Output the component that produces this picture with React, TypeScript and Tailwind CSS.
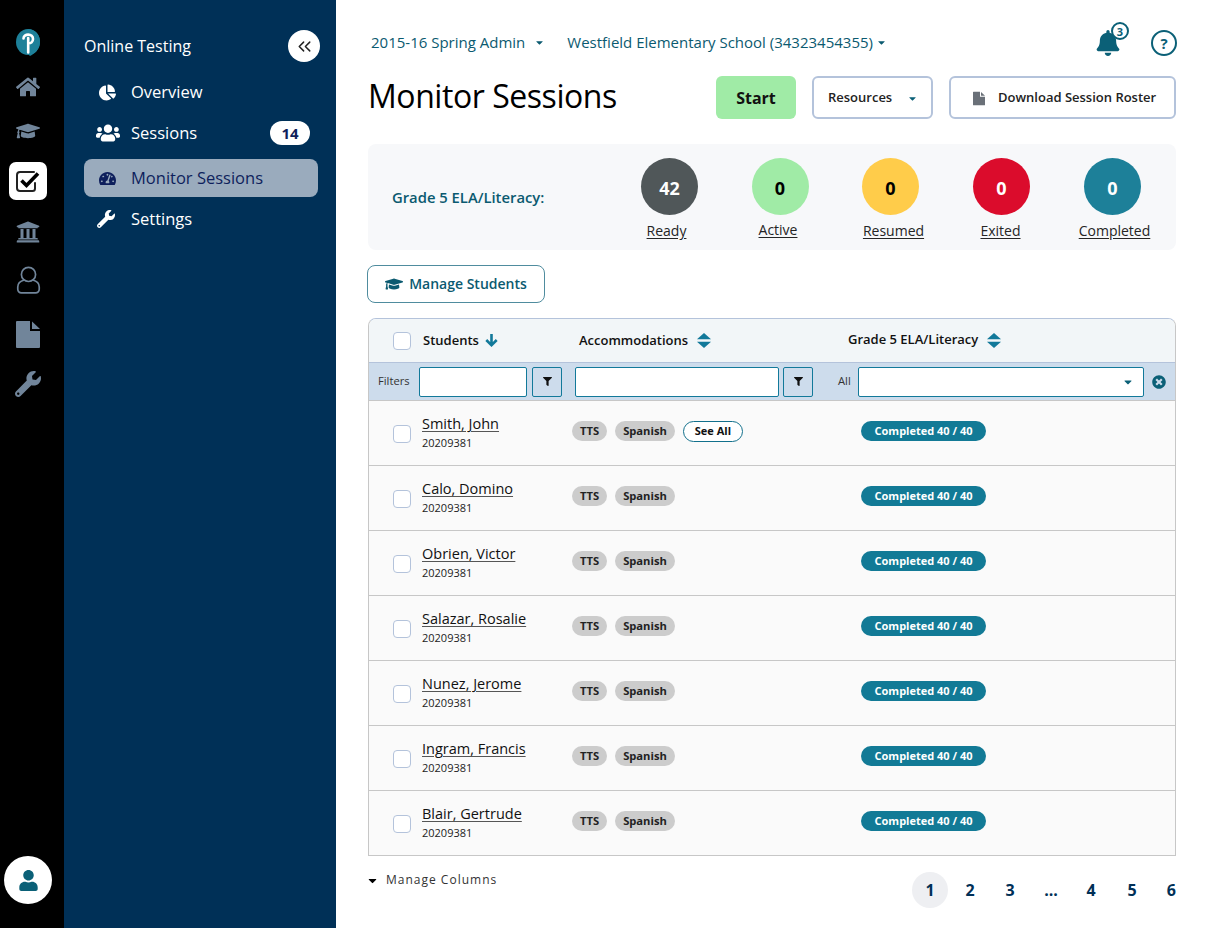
import React from "react";
import {
  FaHome, FaGraduationCap, FaUniversity, FaWrench, FaChartPie, FaUsers, FaTachometerAlt,
  FaBell, FaFilter, FaTimesCircle, FaUser, FaCaretDown,
} from "react-icons/fa";
import { ChevronsLeft } from "lucide-react";

const students = [
  "Smith, John", "Calo, Domino", "Obrien, Victor", "Salazar, Rosalie", "Nunez, Jerome", "Ingram, Francis", "Blair, Gertrude",
];

const stats = [
  { value: "42", label: "Ready", w: "w-[111px]", circle: "bg-[#505759] text-white", offset: "mr-[6px]", mt: "mt-[6px]" },
  { value: "0", label: "Active", w: "w-[110px]", circle: "bg-[#A0EBA6] text-black", offset: "mr-[4px]", mt: "mt-[5px]" },
  { value: "0", label: "Resumed", w: "w-[111px]", circle: "bg-[#FFCC4A] text-black", offset: "ml-[6px]", mt: "mt-[6px]" },
  { value: "0", label: "Exited", w: "w-[111px]", circle: "bg-[#DB0C2C] text-white", offset: "mr-[2px]", mt: "mt-[6px]" },
  { value: "0", label: "Completed", w: "w-[111px]", circle: "bg-[#1D8099] text-white", offset: "ml-[4px]", mt: "mt-[6px]" },
];

function Stat({ s }: { s: (typeof stats)[number] }) {
  return (
    <div className={`flex flex-col items-center ${s.w}`}>
      <div className={`flex h-[57px] w-[57px] items-center justify-center rounded-full pt-[3px] text-[18px] font-bold ${s.circle}`}>{s.value}</div>
      <span className={`whitespace-nowrap text-[14px] leading-[20px] text-[#252525] underline underline-offset-2 ${s.offset} ${s.mt}`}>{s.label}</span>
    </div>
  );
}

function Checkbox() {
  return <span className="block h-[18px] w-[18px] rounded-[4px] border border-[#B4C3DB] bg-white" />;
}

function SortIcon() {
  return (
    <svg width="14" height="15" viewBox="0 0 14 15" className="text-[#12799A]" fill="currentColor">
      <path d="M7 0 14 6.3H0Z" />
      <path d="M0 8.7H14L7 15Z" />
    </svg>
  );
}

function FileIcon({ w, h, className }: { w: number; h: number; className: string }) {
  return (
    <svg width={w} height={h} viewBox="0 0 24 27" className={className} fill="currentColor">
      <path d="M1 0H14V10H24V26A1 1 0 0 1 23 27H1A1 1 0 0 1 0 26V1A1 1 0 0 1 1 0Z" />
      <path d="M16 0.5 24 8H16Z" />
    </svg>
  );
}

function Tag({ children }: { children: React.ReactNode }) {
  return (
    <span className="flex h-[20px] items-center rounded-full bg-[#CCCCCC] px-[8px] text-[11.2px] font-bold text-[#222]">{children}</span>
  );
}

function Row({ name, first }: { name: string; first: boolean }) {
  return (
    <div className="flex h-[65px] items-center border-b border-[#C7C7C7] bg-[#FAFAFA] pl-[24px] last:h-[64px] last:border-b-0">
      <div className="w-[29px] pt-[2px]"><Checkbox /></div>
      <div className="flex w-[150px] flex-col pb-[1px]">
        <span className="text-[14.5px] leading-[17px] text-[#111] underline decoration-[#555] underline-offset-2">{name}</span>
        <span className="mt-[4px] text-[11px] leading-[14px] text-[#222]">20209381</span>
      </div>
      <div className="flex w-[289px] items-center gap-[8px] pb-[4px]">
        <Tag>TTS</Tag>
        <Tag>Spanish</Tag>
        {first && (
          <span className="flex h-[21px] items-center rounded-full border border-[#12708C] bg-white px-[11px] text-[11px] font-bold text-[#111]">See All</span>
        )}
      </div>
      <div className="pb-[4px]">
        <span className="flex h-[20px] w-[125px] items-center justify-center rounded-full bg-[#127A96] text-[11px] font-bold text-white">Completed 40 / 40</span>
      </div>
    </div>
  );
}

function NavItem({ icon, label, active, badge, h }: { icon: React.ReactNode; label: string; active?: boolean; badge?: string; h: string }) {
  return (
    <div className={`flex items-center rounded-[8px] ${h} ${active ? "bg-[#9AABBD] text-[#0E1F5C]" : "text-white"}`}>
      <div className="flex w-[47px] justify-center">{icon}</div>
      <span className={`text-[16.5px] leading-[22px] ${active ? "pb-[1px]" : ""}`}>{label}</span>
      {badge && (
        <span className="ml-auto mr-[8px] flex h-[24px] w-[40px] items-center justify-center rounded-full bg-white text-[15px] font-bold text-[#0E1F5C]">{badge}</span>
      )}
    </div>
  );
}

function RailIcon({ children, h }: { children: React.ReactNode; h: string }) {
  return <div className={`flex w-full items-center justify-center text-[#71859A] ${h}`}>{children}</div>;
}

function FilterButton() {
  return (
    <span className="flex h-[30px] w-[30px] items-center justify-center rounded-[2px] border border-[#12799A] bg-[#CDDCEC] text-[#111]">
      <FaFilter size={9} />
    </span>
  );
}

export default function App() {
  return (
    <div className="flex h-[928px] w-[1208px] overflow-hidden bg-white font-['Open_Sans',sans-serif]">
      {/* rail */}
      <aside className="flex h-full w-[64px] shrink-0 flex-col items-center bg-black pt-[29px] pr-[8px]">
        <svg width="24" height="27" viewBox="0 0 24 27" aria-label="Pearson">
          <path d="M12 0C18.6 0 24 5.4 24 12.2 24 19.5 19 24 15 26.6 14 27.2 13 26.6 13 25.5V21" fill="#1D8099" />
          <ellipse cx="12" cy="13" rx="12" ry="13" fill="#1D8099" />
          <path d="M7.5 9.5C7.5 7 9.8 5.6 12.2 5.6 15 5.6 17 7.4 17 10 17 12.8 14.8 14.4 12.6 14.4M12.2 9V23.5" fill="none" stroke="#fff" strokeWidth="2.6" strokeLinecap="round" />
        </svg>
        <RailIcon h="h-[44px] mt-[9px]"><FaHome size={24} /></RailIcon>
        <RailIcon h="h-[44px]"><FaGraduationCap size={24} /></RailIcon>
        <div className="mt-[9px] flex h-[38px] w-[38px] items-center justify-center rounded-[7px] bg-white">
          <svg width="26" height="24" viewBox="0 0 26 24" fill="none">
            <path d="M20 14v5.5a2.5 2.5 0 0 1-2.5 2.5H5a3 3 0 0 1-3-3V6a3 3 0 0 1 3-3h14" stroke="#222" strokeWidth="2" strokeLinecap="round" />
            <path d="M6.5 11.5 11.5 16.5 23 4.5" stroke="#000" strokeWidth="3.6" />
          </svg>
        </div>
        <RailIcon h="h-[44px] mt-[10px]"><FaUniversity size={24} /></RailIcon>
        <div className="flex h-[52px] w-full items-center justify-center">
          <svg width="25" height="28" viewBox="0 0 25 30" fill="none" stroke="#71859A" strokeWidth="1.8">
            <circle cx="12.5" cy="9" r="7.6" />
            <path d="M8 15C4 16 1 18.5 1 22.5V25A3.8 3.8 0 0 0 4.8 28.8H20.2A3.8 3.8 0 0 0 24 25V22.5C24 18.5 21 16 17 15" />
          </svg>
        </div>
        <RailIcon h="h-[56px]"><FileIcon w={24} h={27} className="text-[#71859A]" /></RailIcon>
        <RailIcon h="h-[44px]"><FaWrench size={26} /></RailIcon>
        <div className="mt-auto mb-[24px] flex h-[48px] w-[48px] items-center justify-center rounded-full bg-white text-[#0B6077]">
          <FaUser size={21} />
        </div>
      </aside>

      {/* sub nav */}
      <nav className="h-full w-[272px] shrink-0 bg-[#003057] pl-[20px] pr-[18px] pt-[30px]">
        <div className="flex h-[32px] items-center justify-between">
          <span className="text-[16px] text-white">Online Testing</span>
          <span className="-mr-[2px] flex h-[32px] w-[32px] items-center justify-center rounded-full bg-white text-[#222]"><ChevronsLeft size={21} strokeWidth={1.7} /></span>
        </div>
        <div className="mt-[9px] flex flex-col">
          <NavItem h="h-[42px]" icon={<FaChartPie size={17} />} label="Overview" />
          <NavItem h="h-[40px]" icon={<FaUsers size={24} />} label="Sessions" badge="14" />
          <div className="h-[6px]" />
          <NavItem h="h-[38px]" active icon={<FaTachometerAlt size={17} />} label="Monitor Sessions" />
          <div className="h-[2px]" />
          <NavItem h="h-[40px]" icon={<FaWrench size={18} className="-ml-[3px]" />} label="Settings" />
        </div>
      </nav>

      {/* main */}
      <main className="flex min-w-0 flex-1 flex-col pl-[32px] pr-[32px]">
        <div className="flex h-[76px] items-center pl-[3px] pt-[10px] text-[#0B5A70]">
          <div className="flex items-center pb-[2px]">
            <span className="text-[15px]">2015-16 Spring Admin</span>
            <FaCaretDown size={11} className="ml-[9px]" />
            <span className="ml-[22px] text-[15px]">Westfield Elementary School (34323454355)</span>
            <FaCaretDown size={11} className="ml-[3px]" />
          </div>
          <div className="-mr-[1px] ml-auto flex items-center">
            <div className="relative mr-[30px]">
              <FaBell size={26} className="text-[#0B6077]" />
              <span className="absolute -right-[8px] -top-[8px] flex h-[18px] w-[18px] items-center justify-center rounded-full border-[2px] border-[#0B6077] bg-white text-[11px] font-bold leading-none text-[#0B6077]">3</span>
            </div>
            <span className="flex h-[26px] w-[26px] items-center justify-center rounded-full border-[2px] border-[#0B6077] text-[15px] font-bold text-[#0B6077]">?</span>
          </div>
        </div>

        <div className="flex h-[43px] items-center">
          <h1 className="pb-[4px] text-[32px] font-medium leading-none tracking-[-0.45px] text-black">Monitor Sessions</h1>
          <button className="ml-auto flex h-[43px] w-[80px] items-center justify-center rounded-[6px] bg-[#A0EBA6] text-[16px] font-bold text-[#111]">Start</button>
          <button className="ml-[16px] flex h-[43px] w-[121px] items-center rounded-[6px] border-2 border-[#B4C3DB] bg-white pl-[14px] pt-[1px] text-[13px] font-semibold text-[#222]">
            Resources
            <FaCaretDown size={11} className="ml-[15px] text-[#0B6077]" />
          </button>
          <button className="ml-[16px] flex h-[43px] w-[227px] items-center rounded-[6px] border-2 border-[#B4C3DB] bg-white pl-[22px] pt-[1px] text-[13px] font-semibold text-[#222]">
            <FileIcon w={12} h={15} className="mr-[13px] text-[#6A7078]" />
            Download Session Roster
          </button>
        </div>

        <section className="mt-[25px] flex h-[106px] items-center rounded-[8px] bg-[#F7F8FA] pb-[1px]">
          <span className="ml-[24px] w-[222px] whitespace-nowrap pt-[2px] text-[14.8px] font-semibold text-[#0B5A70]">Grade 5 ELA/Literacy:</span>
          <div className="flex pt-[6px]">
            {stats.map((s) => <Stat key={s.label} s={s} />)}
          </div>
        </section>

        <button className="-ml-[1px] mt-[15px] flex h-[38px] w-[178px] items-center justify-center gap-[6px] rounded-[8px] border-[1.5px] border-[#4F8C9E] bg-white pb-[1px] text-[14px] font-semibold text-[#0B5A70]">
          <FaGraduationCap size={18} />
          Manage Students
        </button>

        <div className="mt-[15px] overflow-hidden rounded-t-[8px] border border-[#B4C3DB] border-b-[#C7C7C7] border-x-[#C7C7C7]">
          <div className="flex h-[43px] items-center bg-[#F2F6F8] pl-[24px] text-[13px] font-semibold text-[#111]">
            <div className="w-[30px]"><Checkbox /></div>
            <div className="flex w-[156px] items-center gap-[6px]">
              Students
              <svg width="13" height="13" viewBox="0 0 13 13" className="text-[#12799A]" fill="none" stroke="currentColor" strokeWidth="2.6">
                <path d="M6.5 0V11M1.3 6 6.5 11.2 11.7 6" />
              </svg>
            </div>
            <div className="flex w-[269px] items-center gap-[9px]">Accommodations <SortIcon /></div>
            <div className="flex items-center gap-[9px] pb-[1px]">Grade 5 ELA/Literacy <SortIcon /></div>
          </div>
          <div className="flex h-[39px] items-center border-y border-y-[#B4C3DB] border-b-[#C7C7C7] bg-[#CDDCEC] pl-[9px]">
            <span className="w-[41px] text-[11.2px] text-[#333]">Filters</span>
            <span className="h-[30px] w-[108px] rounded-[2px] border border-[#12799A] bg-white" />
            <span className="ml-[5px]"><FilterButton /></span>
            <span className="ml-[13px] h-[30px] w-[204px] rounded-[2px] border border-[#12799A] bg-white" />
            <span className="ml-[4px]"><FilterButton /></span>
            <span className="ml-[25px] w-[20px] text-[11.2px] text-[#333]">All</span>
            <span className="flex h-[30px] w-[286px] items-center justify-end rounded-[2px] border border-[#12799A] bg-white pr-[9px] text-[#0B6077]">
              <FaCaretDown size={12} />
            </span>
            <FaTimesCircle size={14} className="ml-[8px] text-[#0B6077]" />
          </div>
          {students.map((n, i) => <Row key={n} name={n} first={i === 0} />)}
        </div>

        <div className="mt-[13px] flex items-start justify-between">
          <div className="flex items-center pt-[2px] text-[#111]">
            <FaCaretDown size={13} className="-ml-[2px] text-black" />
            <span className="ml-[7px] text-[12px] tracking-[1px] text-[#333]">Manage Columns</span>
          </div>
          <div className="mt-[3px] flex items-center text-[16px] font-bold text-[#003057]">
            <span className="flex h-[36px] w-[36px] items-center justify-center rounded-full bg-[#EEEFF2]">1</span>
            <span className="flex w-[44px] justify-center">2</span>
            <span className="flex w-[36px] justify-center">3</span>
            <span className="flex w-[46px] justify-center">...</span>
            <span className="flex w-[34px] justify-center">4</span>
            <span className="flex w-[48px] justify-center">5</span>
            <span className="flex w-[20px] justify-end">6</span>
          </div>
        </div>
      </main>
    </div>
  );
}
